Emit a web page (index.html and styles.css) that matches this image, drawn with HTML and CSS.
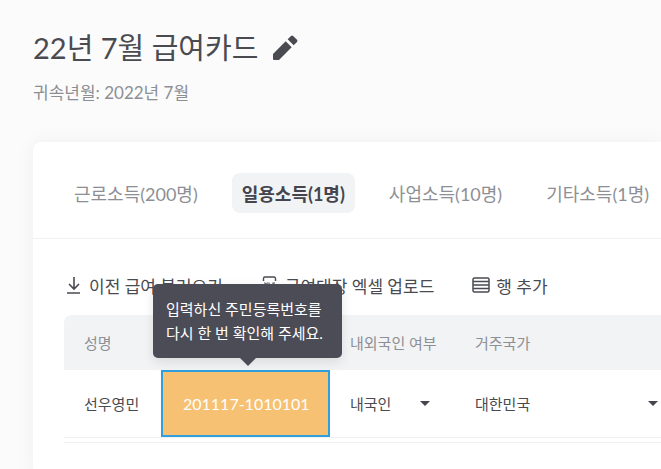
FILE: index.html
```html
<!DOCTYPE html>
<html lang="ko">
<head>
    <meta charset="UTF-8">
    <meta name="viewport" content="width=device-width, initial-scale=1.0">
    <title>급여카드</title>
    <link rel="stylesheet" href="styles.css">
</head>
<body>
    <header class="page-header">
        <div class="title-row">
            <h1>22년 7월 급여카드</h1>
            <button class="edit-button" aria-label="수정">
                <svg width="32" height="32" viewBox="0 0 24 24" fill="currentColor"><path d="M3 16.500V20.200a.8.8 0 0 0 .8.8H7.500L17 11.500l-4.500-4.500zM21 7.500a1.200 1.200 0 0 0 0-1.600l-2.900-2.900a1.200 1.200 0 0 0-1.600 0l-2.500 2.500 4.500 4.500z"/></svg>
            </button>
        </div>
        <p class="period">귀속년월: 2022년 7월</p>
    </header>

    <main class="card">
        <nav class="tabs">
            <button class="tab">근로소득(200명)</button>
            <button class="tab active">일용소득(1명)</button>
            <button class="tab">사업소득(10명)</button>
            <button class="tab">기타소득(1명)</button>
        </nav>

        <div class="content">
            <div class="toolbar">
                <button class="tool">
                    <svg width="20" height="20" viewBox="0 0 20 20" fill="none" stroke="currentColor" stroke-width="1.6"><path d="M10 2v12M5 9l5 5 5-5M3 18h13"/></svg>
                    이전 급여 불러오기
                </button>
                <button class="tool">
                    <svg width="20" height="20" viewBox="0 0 20 20" fill="none" stroke="currentColor" stroke-width="1.4"><path d="M3.500 6V3.500A1.500 1.500 0 0 1 5 2h9a1.500 1.500 0 0 1 1.500 1.500V6M3.500 15v1.500A1.500 1.500 0 0 0 5 18h9a1.500 1.500 0 0 0 1.500-1.500V15"/><path stroke-width="1.100" d="M4.500 7.500l3 5M7.500 7.500l-3 5M9 7.500v5h2M15 8h-2v2.200h2v2.300h-2.500"/></svg>
                    급여대장 엑셀 업로드
                </button>
                <button class="tool">
                    <svg width="20" height="20" viewBox="0 0 20 20" fill="none" stroke="currentColor" stroke-width="1.5"><rect x="2" y="3" width="16" height="14" rx="1.500"/><path d="M2 6.500h16M2 10h16M2 13.500h16"/></svg>
                    행 추가
                </button>
            </div>

            <table class="pay-table">
                <thead>
                    <tr>
                        <th class="col-name">성명</th>
                        <th class="col-id" aria-label="주민등록번호"></th>
                        <th class="col-local">내외국인 여부</th>
                        <th class="col-country">거주국가</th>
                    </tr>
                </thead>
                <tbody>
                    <tr>
                        <td>선우영민</td>
                        <td class="id-cell">
                            <input class="id-input" type="text" value="201117-1010101" aria-label="주민등록번호" aria-describedby="id-tip">
                            <div class="tooltip" id="id-tip" role="tooltip">입력하신 주민등록번호를<br>다시 한 번 확인해 주세요.</div>
                        </td>
                        <td>
                            <div class="select-box">
                                <select aria-label="내외국인 여부">
                                    <option>내국인</option>
                                    <option>외국인</option>
                                </select>
                            </div>
                        </td>
                        <td>
                            <div class="select-box">
                                <select aria-label="거주국가">
                                    <option>대한민국</option>
                                </select>
                            </div>
                        </td>
                    </tr>
                </tbody>
            </table>
        </div>
    </main>
</body>
</html>
```
FILE: styles.css
```css
* {
    box-sizing: border-box;
}

body {
    font-family: Lato, "Noto Sans CJK KR", sans-serif;
    color: #4a4b51;
    background-color: #fbfbfb;
    margin: 0;
    min-height: 100vh;
    display: flex;
    flex-direction: column;
    overflow: hidden;
}

button,
input,
select {
    font: inherit;
    color: inherit;
    background: none;
    border: none;
    padding: 0;
    margin: 0;
}

button {
    cursor: pointer;
}

svg {
    display: block;
    flex-shrink: 0;
}

.page-header {
    padding: 24px 33px;
}

.title-row {
    display: flex;
    align-items: center;
    gap: 11px;
}

h1 {
    font-size: 29px;
    font-weight: 400;
    line-height: 48px;
    margin: 0;
}

.period {
    font-size: 17px;
    line-height: 26px;
    color: #8d8f94;
    margin: 8px 0 0;
}

.card {
    flex: 1;
    margin-left: 33px;
    margin-top: 12px;
    background-color: white;
    border-radius: 8px 0 0 0;
    box-shadow: 0 0 20px rgba(0, 0, 0, 0.05);
}

.tabs {
    display: flex;
    gap: 24px;
    padding: 31px 31px 25px;
    border-bottom: 1px solid #eff0f2;
    white-space: nowrap;
}

.tab {
    height: 40px;
    padding: 0 10px;
    font-size: 18px;
    color: #8d8f94;
    border-radius: 8px;
}

.tab.active {
    font-weight: 700;
    color: #44454d;
    background-color: #f1f3f5;
}

.content {
    padding: 32px 0 32px 31px;
}

.toolbar {
    display: flex;
    gap: 37px;
    margin-bottom: 16px;
    white-space: nowrap;
}

.tool {
    display: flex;
    align-items: center;
    gap: 5px;
    height: 28px;
    font-size: 17px;
}

/* last column runs past the card edge */
.pay-table {
    width: calc(100% + 22px);
    border-collapse: separate;
    border-spacing: 0;
    table-layout: fixed;
    font-size: 15px;
    border-bottom: 1px solid #eff0f2;
    padding-bottom: 4px;
}

.col-name {
    width: 97px;
}

.col-id {
    width: 169px;
}

.col-local {
    width: 125px;
}

.pay-table th,
.pay-table td {
    padding: 0 0 0 20px;
    text-align: left;
}

.pay-table th {
    height: 55px;
    font-weight: 400;
    color: #8d8f94;
    background-color: #f1f3f5;
}

.pay-table th:first-child {
    border-top-left-radius: 8px;
}

.pay-table td {
    height: 68px;
    border-bottom: 1px solid #eff0f2;
}

.pay-table .id-cell {
    position: relative;
    padding: 0;
}

.id-input {
    display: block;
    width: 100%;
    height: 67px;
    padding: 0 0 0 20px;
    font-size: 16px;
    color: white;
    background-color: #f6c172;
    border: 2px solid #2fa0dc;
    outline: none;
}

.tooltip {
    position: absolute;
    bottom: calc(100% + 12px);
    left: -8px;
    padding: 13px;
    width: 189px;
    font-size: 15px;
    line-height: 24px;
    color: white;
    background-color: #4c4c57;
    border-radius: 5px;
    white-space: nowrap;
    box-shadow: 0 4px 12px rgba(0, 0, 0, 0.1);
}

.tooltip::after {
    content: "";
    position: absolute;
    top: 100%;
    left: 50%;
    margin-left: -8px;
    border: 8px solid transparent;
    border-top-color: #4c4c57;
    border-bottom: none;
}

.select-box {
    display: flex;
    align-items: center;
}

.select-box select {
    appearance: none;
    flex: 1;
    min-width: 0;
}

.select-box::after {
    content: "";
    margin-right: 25px;
    border: 5px solid transparent;
    border-top-color: #44454d;
    border-bottom: none;
}
```
